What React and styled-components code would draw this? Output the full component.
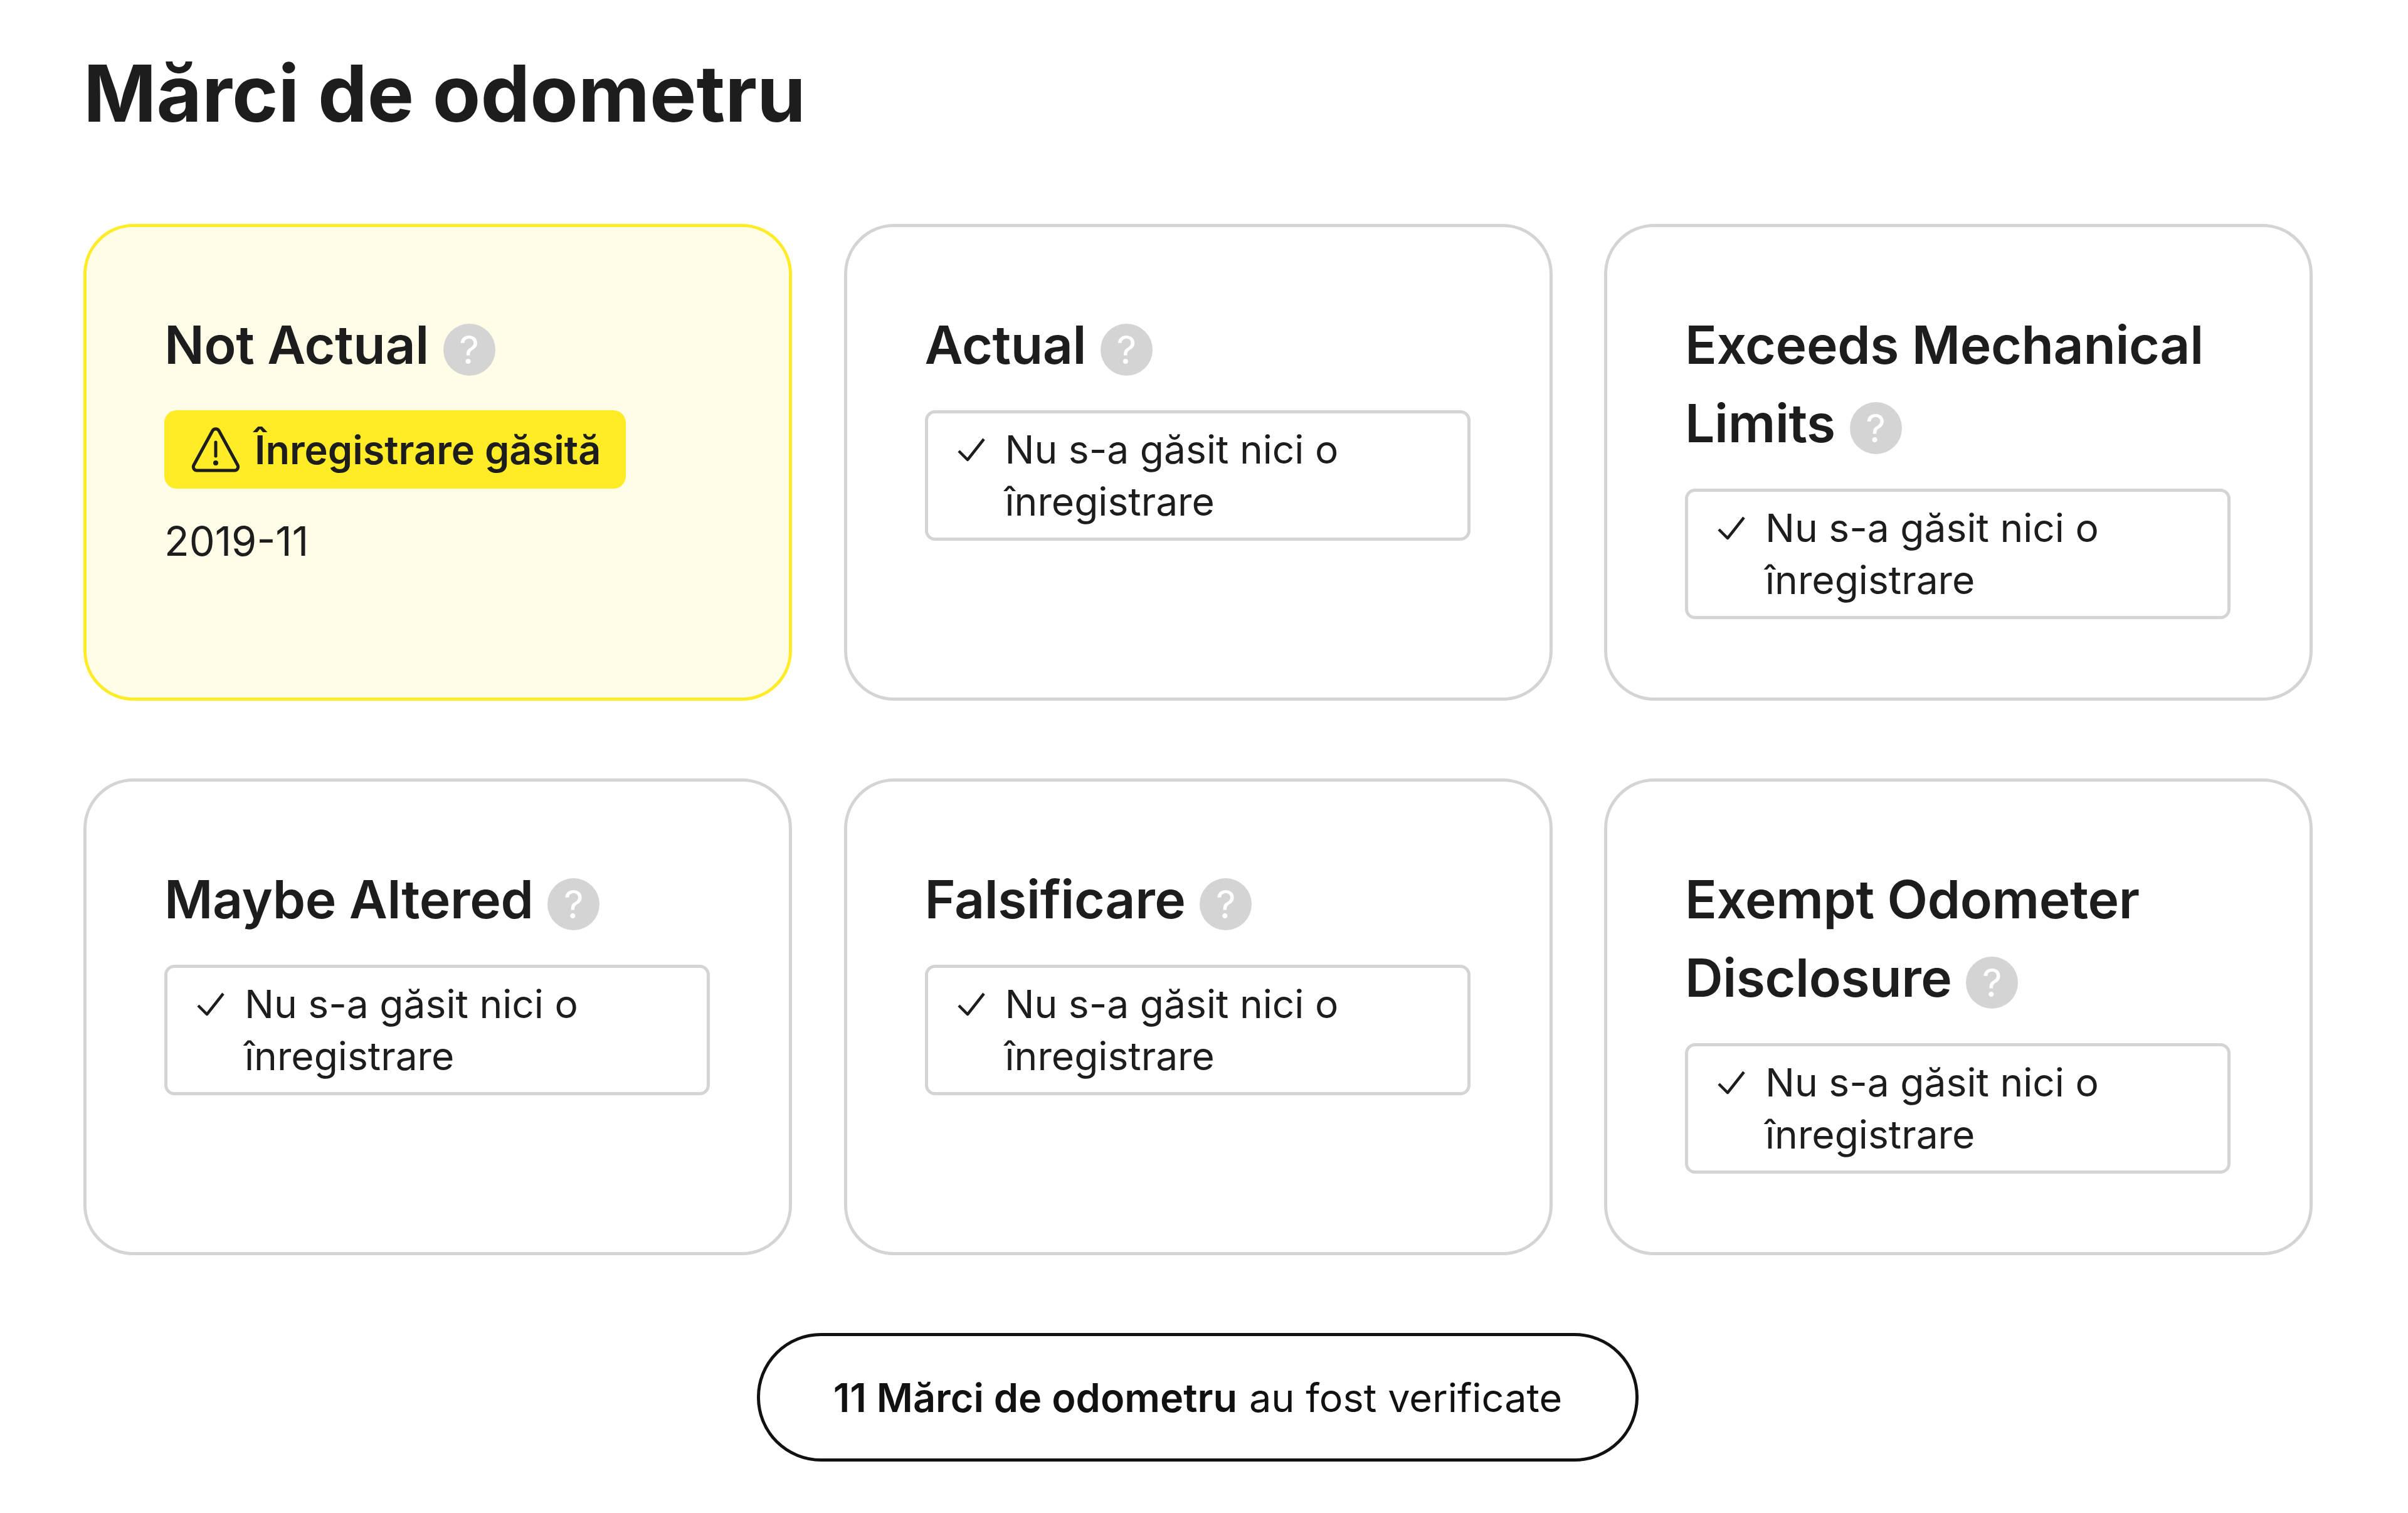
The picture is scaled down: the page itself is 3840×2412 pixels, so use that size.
import React from 'react';
import styled, { createGlobalStyle } from 'styled-components';

const cards = [
  { title: 'Not Actual', found: true, date: '2019-11' },
  { title: 'Actual' },
  { title: 'Exceeds Mechanical Limits' },
  { title: 'Maybe Altered' },
  { title: 'Falsificare' },
  { title: 'Exempt Odometer Disclosure' },
];

function WarningIcon() {
  return (
    <svg width="80" height="80" viewBox="0 0 80 80" fill="none" stroke="#1d1d1d" strokeWidth="5" strokeLinejoin="round" strokeLinecap="round">
      <path d="M35 9.5c2.2-3.8 7.8-3.8 10 0l30 55c2 3.8-.6 8.5-5 8.5H10c-4.400 0-7-4.700-5-8.500z" />
      <path d="M40 28v22" />
      <circle cx="40" cy="61" r="1.500" fill="#1d1d1d" />
    </svg>
  );
}

function CheckIcon() {
  return (
    <svg width="44" height="44" viewBox="0 0 44 44" fill="none" stroke="#1d1d1d" strokeWidth="4.500" strokeLinejoin="round">
      <path d="M2 24l14 14L42 5" />
    </svg>
  );
}

function Card({ title, found, date }) {
  return (
    <StyledCard $found={found}>
      <CardTitle>
        {title} <Help>?</Help>
      </CardTitle>
      {found ? (
        <>
          <Badge>
            <WarningIcon />
            Înregistrare găsită
          </Badge>
          <DateText>{date}</DateText>
        </>
      ) : (
        <EmptyBox>
          <CheckIcon />
          <span>Nu s-a găsit nici o înregistrare</span>
        </EmptyBox>
      )}
    </StyledCard>
  );
}

export default function App() {
  return (
    <>
      <GlobalStyle />
      <Page>
        <Heading>Mărci de odometru</Heading>
        <Grid>
          {cards.map((card) => (
            <Card key={card.title} {...card} />
          ))}
        </Grid>
        <Summary>
          <b>11 Mărci de odometru</b> au fost verificate
        </Summary>
      </Page>
    </>
  );
}

const GlobalStyle = createGlobalStyle`
  html, body {
    margin: 0;
    background: #fff;
  }
  * {
    box-sizing: border-box;
  }
`;

const Page = styled.div`
  width: 3840px;
  height: 2412px;
  padding: 74px 153px 0 133px;
  display: flex;
  flex-direction: column;
  overflow: hidden;
  font-family: Inter, sans-serif;
  color: #1d1d1d;
`;

const Heading = styled.h1`
  margin: 0 0 133px;
  font-size: 125px;
  line-height: 150px;
  font-weight: 700;
`;

const Grid = styled.div`
  display: grid;
  grid-template-columns: repeat(3, 1130px);
  grid-auto-rows: 760px;
  column-gap: 82.500px;
  row-gap: 124px;
`;

const StyledCard = styled.div`
  padding: 125px 126px 125px 124px;
  border: 5px solid ${(p) => (p.$found ? '#ffec27' : '#d4d4d4')};
  border-radius: 80px;
  background: ${(p) => (p.$found ? '#fffce8' : '#fff')};
`;

const CardTitle = styled.h3`
  margin: 0 0 42px;
  font-size: 84px;
  line-height: 125px;
  font-weight: 600;
  letter-spacing: -0.400px;
`;

const Help = styled.span`
  display: inline-flex;
  align-items: center;
  justify-content: center;
  width: 83px;
  height: 83px;
  margin-left: 2px;
  border-radius: 50%;
  background: #d4d4d4;
  color: #fff;
  font-size: 62px;
  font-weight: 400;
  letter-spacing: 0;
  vertical-align: middle;
`;

const Badge = styled.div`
  display: inline-flex;
  align-items: center;
  gap: 22px;
  height: 125px;
  padding: 0 40px 0 42px;
  border-radius: 20px;
  background: #ffec27;
  font-size: 63px;
  font-weight: 600;
  white-space: nowrap;
`;

const DateText = styled.div`
  margin-top: 42px;
  font-size: 65px;
  line-height: 83px;
`;

const EmptyBox = styled.div`
  display: flex;
  align-items: flex-start;
  gap: 32px;
  padding: 16px 120px 16px 47px;
  border: 5px solid #d4d4d4;
  border-radius: 16px;
  font-size: 62.300px;
  line-height: 83px;

  svg {
    flex: none;
    margin-top: 20px;
  }
`;

const Summary = styled.div`
  align-self: center;
  display: flex;
  align-items: center;
  justify-content: center;
  gap: 0.3em;
  width: 1406px;
  height: 205px;
  margin-top: 124px;
  border: 5px solid #111;
  border-radius: 102px;
  font-size: 63px;
  color: #111;

  b {
    font-weight: 600;
  }
`;
